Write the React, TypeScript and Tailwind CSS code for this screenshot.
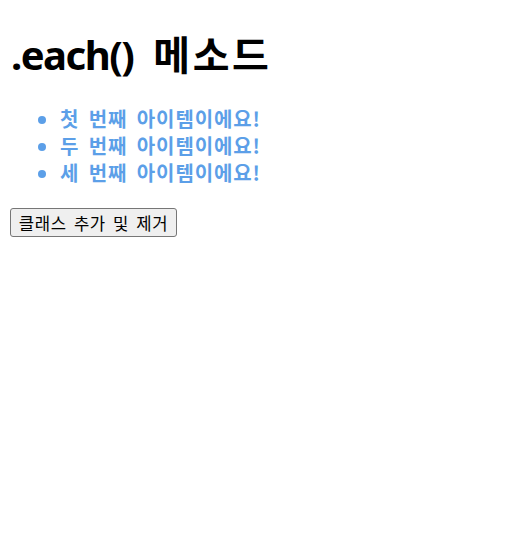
export default function App() {
  return (
    <div className="px-[10px] pt-[27px] text-black font-['Noto_Sans_CJK_KR','Noto_Sans',sans-serif]">
      <h1 className="text-[40px] font-bold leading-[53px] flex items-baseline">
        <span className="font-['Noto_Sans','Noto_Sans_CJK_KR',sans-serif] tracking-[-1.5px] pl-[1px]">.each()</span>
        <span className="ml-[20px] tracking-[2.5px]">메소드</span>
      </h1>
      <ul className="list-disc pl-[50px] mt-[24px] mb-[22px] text-[20px] font-bold leading-[27px] text-[#5c9fe8] marker:text-[#5c9fe8] tracking-[0.9px] [word-spacing:4px]">
        <li>첫 번째 아이템이에요!</li>
        <li>두 번째 아이템이에요!</li>
        <li>세 번째 아이템이에요!</li>
      </ul>
      <button className="w-[167px] h-[29px] text-[16.67px] leading-[20px] bg-[#efefef] border border-[#767676] rounded-[3px] text-black tracking-[0.6px] [word-spacing:3px]">
        클래스 추가 및 제거
      </button>
    </div>
  );
}
